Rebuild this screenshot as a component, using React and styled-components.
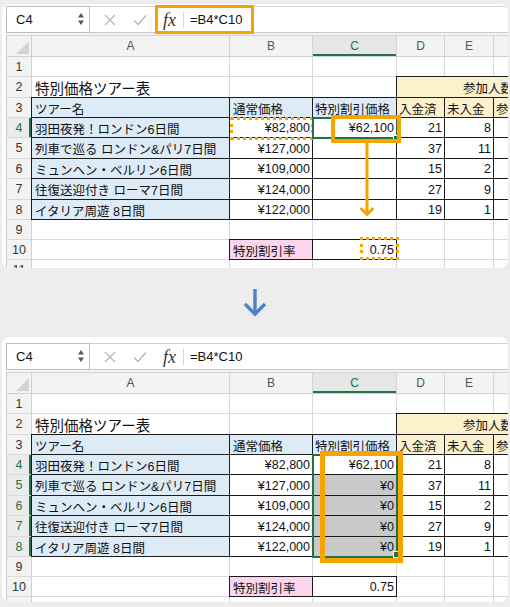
import styled, { createGlobalStyle, css } from 'styled-components'

const GREEN = '#217346'
const ORANGE = '#f7a400'
const BLUE = '#ddebf7'
const YELLOW = '#fdf0cc'
const PINK = '#fbd5eb'
const PICKED = '#c9c9c9'
const GRID = '#dadada'

const COLUMNS = ['A', 'B', 'C', 'D', 'E', 'F']
const COL_WIDTHS = [26, 198, 83, 84, 48, 49, 60]
const ROW_HEIGHTS = [21, 20, 21, 20, 20, 21, 20, 21, 20, 20, 20, 20]

const TOURS = [
  ['羽田夜発！ロンドン6日間', '¥82,800', 21, 8],
  ['列車で巡る ロンドン&パリ7日間', '¥127,000', 37, 11],
  ['ミュンヘン・ベルリン6日間', '¥109,000', 15, 2],
  ['往復送迎付き ローマ7日間', '¥124,000', 27, 9],
  ['イタリア周遊 8日間', '¥122,000', 19, 1],
]

const GlobalStyle = createGlobalStyle`
  * { box-sizing: border-box; }
  html, body { margin: 0; background: #ededed; }
  body {
    font-family: "Liberation Sans", "Noto Sans CJK JP", sans-serif;
    -webkit-font-smoothing: antialiased;
  }
`

const Page = styled.div`
  width: 510px;
  height: 607px;
  padding: 4px 2px 0;
  display: flex;
  flex-direction: column;
`

const Card = styled.div`
  height: ${({ $h }) => $h}px;
  background: #fff;
  border-radius: 8px;
  overflow: hidden;
  padding: ${({ $pt }) => $pt}px 0 0 4px;
`

const ArrowRow = styled.div`
  height: 69px;
  display: flex;
  align-items: center;
  justify-content: center;
`

const Sheet = styled.div`
  position: relative;
  width: 560px;
`

const FormulaBar = styled.div`
  display: flex;
  align-items: center;
  height: 27px;
  background: #fff;
  border-top: 1px solid #d2d2d2;
  border-bottom: 1px solid #c9c9c9;
`

const NameBox = styled.div`
  width: 84px;
  height: 27px;
  margin-top: -1px;
  border: 1px solid #bdbdbd;
  display: flex;
  align-items: center;
  justify-content: space-between;
  padding: 0 4px 0 9px;
  font-size: 13px;
  color: #111;
`

const Tool = styled.span`
  display: flex;
  align-items: center;
  margin-left: ${({ $ml }) => $ml}px;
`

const Fx = styled.span`
  font-family: "Liberation Serif", "DejaVu Serif", serif;
  font-style: italic;
  font-size: 18px;
  color: #333;
  margin-left: 16px;
  padding-right: 7px;
  border-right: 1px solid #d6d6d6;
  line-height: 16px;
`

const Formula = styled.span`
  margin-left: 6px;
  font-size: 13px;
  color: #111;
`

const BarGap = styled.div`
  height: 3px;
  background: #f4f4f4;
  border-bottom: 1px solid #d3d3d3;
`

const Grid = styled.div`
  display: grid;
  grid-template-columns: ${COL_WIDTHS.map((w) => w + 'px').join(' ')};
  grid-template-rows: ${ROW_HEIGHTS.map((h) => h + 'px').join(' ')};
`

const Corner = styled.div`
  position: relative;
  background: #f3f3f3;
  border-left: 1px solid #c9c9c9;
  border-right: 1px solid #d0d0d0;
  border-bottom: 1px solid #d0d0d0;
  &::after {
    content: '';
    position: absolute;
    right: 2px;
    bottom: 2px;
    border-left: 13px solid transparent;
    border-bottom: 13px solid #d3d3d3;
  }
`

const ColHead = styled.div`
  display: flex;
  align-items: center;
  justify-content: center;
  background: ${({ $active }) => ($active ? '#e6e6e6' : '#f3f3f3')};
  color: ${({ $active }) => ($active ? GREEN : '#555')};
  border-right: 1px solid #d4d4d4;
  border-bottom: 1px solid #d0d0d0;
  font-size: 12px;
  ${({ $active }) => $active && css`box-shadow: inset 0 -2px 0 ${GREEN};`}
`

const RowHead = styled.div`
  display: flex;
  align-items: center;
  justify-content: center;
  background: ${({ $active }) => ($active ? '#ebebeb' : '#f3f3f3')};
  color: ${({ $active }) => ($active ? GREEN : '#333')};
  border-left: 1px solid #c9c9c9;
  border-right: 1px solid #d0d0d0;
  border-bottom: 1px solid ${GRID};
  font-size: 12.5px;
  ${({ $active }) => $active && css`box-shadow: inset -2px 0 0 ${GREEN};`}
`

const Cell = styled.div`
  position: relative;
  display: flex;
  align-items: center;
  justify-content: ${({ $align }) => ($align === 'right' ? 'flex-end' : 'flex-start')};
  padding: 1px 2px 0 ${({ $indent }) => $indent ?? 3}px;
  grid-column: span ${({ $span }) => $span || 1};
  background: ${({ $bg }) => $bg || '#fff'};
  border-right: 1px solid ${GRID};
  border-bottom: 1px solid ${GRID};
  font-size: ${({ $size }) => $size || 12.5}px;
  color: #111;
  white-space: nowrap;
  ${({ $box }) =>
    $box &&
    css`
      &::after {
        content: '';
        position: absolute;
        inset: -1px;
        border: 1px solid #1c1c1c;
        pointer-events: none;
      }
    `}
`

const Mark = styled.div`
  position: absolute;
  left: ${({ $x }) => $x}px;
  top: ${({ $y }) => $y}px;
  width: ${({ $w }) => $w}px;
  height: ${({ $h }) => $h}px;
  border: ${({ $weight }) => $weight}px ${({ $dotted }) => ($dotted ? 'dotted' : 'solid')}
    ${({ $color }) => $color};
  pointer-events: none;
`

const Handle = styled.div`
  position: absolute;
  left: ${({ $x }) => $x}px;
  top: ${({ $y }) => $y}px;
  width: 7px;
  height: 7px;
  background: ${GREEN};
  border: 1px solid #fff;
`

const Pointer = styled.svg`
  position: absolute;
  left: 353px;
  top: 137px;
`

const buildRows = (after) => {
  const empty = () => [{}, {}, {}, {}, {}, {}]
  const rows = [empty()]
  rows.push([
    { text: '特別価格ツアー表', size: 14.5 },
    {},
    {},
    { text: '参加人数', bg: YELLOW, box: true, span: 3, indent: 66 },
  ])
  rows.push([
    { text: 'ツアー名', bg: BLUE, box: true },
    { text: '通常価格', bg: BLUE, box: true },
    { text: '特別割引価格', bg: BLUE, box: true, indent: 2 },
    { text: '入金済', bg: YELLOW, box: true, indent: 2 },
    { text: '未入金', bg: YELLOW, box: true, indent: 2 },
    { text: '参加', bg: YELLOW, box: true, indent: 2 },
  ])
  TOURS.forEach(([name, price, paid, unpaid], i) => {
    const first = i === 0
    rows.push([
      { text: name, bg: BLUE, box: true },
      { text: price, align: 'right', box: true },
      {
        text: first ? '¥62,100' : after ? '¥0' : '',
        align: 'right',
        box: true,
        bg: after && !first ? PICKED : undefined,
      },
      { text: paid, align: 'right', box: true },
      { text: unpaid, align: 'right', box: true },
      { box: true },
    ])
  })
  rows.push(empty())
  rows.push([
    {},
    { text: '特別割引率', bg: PINK, box: true },
    { text: '0.75', align: 'right', box: true },
    {},
    {},
    {},
  ])
  rows.push(empty())
  return rows
}

const Spinner = () => (
  <svg width="8" height="14" viewBox="0 0 8 14">
    <path d="M4 1 L7 5.5 H1 Z" fill="#555" />
    <path d="M4 13 L7 8.5 H1 Z" fill="#555" />
  </svg>
)

const CancelIcon = () => (
  <svg width="12" height="12" viewBox="0 0 12 12">
    <path d="M1 1 L11 11 M11 1 L1 11" stroke="#b8b8b8" strokeWidth="1.4" fill="none" />
  </svg>
)

const CheckIcon = () => (
  <svg width="14" height="12" viewBox="0 0 14 12">
    <path d="M1 6.5 L5 10.5 L13 1.5" stroke="#b8b8b8" strokeWidth="1.4" fill="none" />
  </svg>
)

const Spreadsheet = ({ after }) => {
  const active = after ? [4, 5, 6, 7, 8] : [4]
  const rows = buildRows(after)

  return (
    <Sheet>
      <FormulaBar>
        <NameBox>
          C4
          <Spinner />
        </NameBox>
        <Tool $ml={14}>
          <CancelIcon />
        </Tool>
        <Tool $ml={17}>
          <CheckIcon />
        </Tool>
        <Fx>fx</Fx>
        <Formula>=B4*C10</Formula>
      </FormulaBar>
      <BarGap />
      <Grid>
        <Corner />
        {COLUMNS.map((c) => (
          <ColHead key={c} $active={c === 'C'}>
            {c}
          </ColHead>
        ))}
        {rows.map((cells, r) => [
          <RowHead key={`h${r}`} $active={active.includes(r + 1)}>
            {r + 1}
          </RowHead>,
          ...cells.map((cell, c) => (
            <Cell
              key={`${r}-${c}`}
              $bg={cell.bg}
              $box={cell.box}
              $align={cell.align}
              $span={cell.span}
              $size={cell.size}
              $indent={cell.indent}
            >
              {cell.text}
            </Cell>
          )),
        ])}
      </Grid>

      {after ? (
        <>
          <Mark $x={306} $y={111} $w={86} $h={104} $weight={2} $color={GREEN} />
          <Handle $x={387} $y={208} />
          <Mark $x={314} $y={108} $w={83} $h={112} $weight={5} $color={ORANGE} />
        </>
      ) : (
        <>
          <Mark $x={149} $y={-1} $w={99} $h={29} $weight={3} $color={ORANGE} />
          <Mark $x={224} $y={111} $w={84} $h={23} $weight={3} $dotted $color={ORANGE} />
          <Mark $x={306} $y={111} $w={86} $h={22} $weight={2} $color={GREEN} />
          <Handle $x={387} $y={129} />
          <Mark $x={325} $y={109} $w={70} $h={28} $weight={4} $color={ORANGE} />
          <Pointer width="16" height="74" viewBox="0 0 16 74">
            <path d="M8 0 V72" stroke={ORANGE} strokeWidth="3" fill="none" />
            <path d="M1.5 65 L8 71.5 L14.5 65" stroke={ORANGE} strokeWidth="3" fill="none" />
          </Pointer>
          <Mark $x={354} $y={231} $w={39} $h={23} $weight={3} $dotted $color={ORANGE} />
        </>
      )}
    </Sheet>
  )
}

const App = () => (
  <Page>
    <GlobalStyle />
    <Card $h={264} $pt={2}>
      <Spreadsheet />
    </Card>
    <ArrowRow>
      <svg width="24" height="28" viewBox="0 0 24 28">
        <path d="M12 0 V26" stroke="#4a86c4" strokeWidth="3.5" fill="none" />
        <path d="M2 15 L12 25 L22 15" stroke="#4a86c4" strokeWidth="3.5" fill="none" />
      </svg>
    </ArrowRow>
    <Card $h={265} $pt={6}>
      <Spreadsheet after />
    </Card>
  </Page>
)

export default App
